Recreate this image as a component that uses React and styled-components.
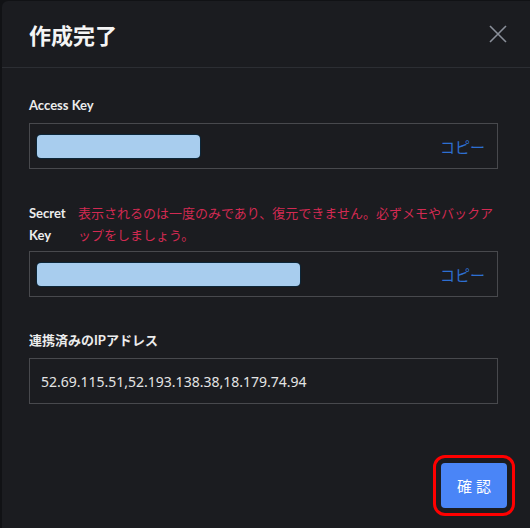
import React from 'react'
import styled, { createGlobalStyle } from 'styled-components'

const GlobalStyle = createGlobalStyle`
    html, body {
        margin: 0;
        background: #111215;
        overflow: hidden;
    }
    * {
        box-sizing: border-box;
    }
`

const Backdrop = styled.div`
    width: 530px;
    height: 528px;
    padding: 1px 0 0 2px;
    background: #111215;
`

const Modal = styled.div`
    width: 528px;
    min-height: 527px;
    background: #1b1c20;
    border-top-left-radius: 6px;
    display: flex;
    flex-direction: column;
`

const Header = styled.header`
    height: 67px;
    display: flex;
    align-items: center;
    justify-content: space-between;
    padding: 0 22px 0 27px;
    border-bottom: 1px solid #2c2e33;
    h1 {
        margin: 0;
        font-family: "Noto Sans CJK JP", sans-serif;
        font-size: 22px;
        font-weight: 700;
        color: #f4f4f4;
        line-height: 1;
    }
`

const CloseButton = styled.button`
    width: 20px;
    height: 20px;
    padding: 0;
    border: none;
    background: none;
    display: flex;
    align-items: center;
    justify-content: center;
    cursor: pointer;
`

const Body = styled.div`
    display: flex;
    flex-direction: column;
    gap: 33px;
    padding: 27px 32px 0 27px;
`

const Field = styled.section`
    display: flex;
    flex-direction: column;
    gap: ${p => p.gap}px;
`

const LabelRow = styled.div`
    display: flex;
    align-items: flex-start;
    gap: 12px;
`

const Label = styled.label`
    flex-shrink: 0;
    width: ${p => (p.width ? `${p.width}px` : 'auto')};
    font-family: "Lato", "Noto Sans CJK JP", sans-serif;
    font-size: 13px;
    font-weight: 700;
    line-height: ${p => p.lh || 20}px;
    color: #ececec;
`

const Warning = styled.p`
    margin: 0;
    flex: 1;
    font-family: "Noto Sans CJK JP", sans-serif;
    font-size: 13px;
    line-height: 22px;
    color: #d22a52;
    line-break: loose;
`

const InputBox = styled.div`
    height: 46px;
    border: 1px solid #48494d;
    display: flex;
    align-items: center;
    justify-content: space-between;
    padding: 0 12px 0 7px;
`

const Masked = styled.div`
    width: ${p => p.width}px;
    height: 23px;
    border-radius: 4px;
    background: #a8cdee;
    box-shadow: 0 0 0 1px #0c2638;
`

const CopyLink = styled.span`
    font-family: "Noto Sans CJK JP", sans-serif;
    font-size: 15px;
    color: #2e6fd2;
    cursor: pointer;
`

const Value = styled.span`
    padding-left: 4px;
    font-family: "Noto Sans", sans-serif;
    font-size: 14px;
    color: #e4e4e4;
`

const Footer = styled.footer`
    display: flex;
    justify-content: flex-end;
    padding: 59px 23px 0 0;
`

const ConfirmButton = styled.button`
    width: 66px;
    height: 45px;
    border: none;
    border-radius: 4px;
    background: #4a85f7;
    color: #ffffff;
    font-family: "Noto Sans CJK JP", sans-serif;
    font-size: 15px;
    letter-spacing: 4px;
    padding: 0 0 0 4px;
    outline: 3px solid #ff0000;
    outline-offset: 5px;
    cursor: pointer;
`

function KeyField({ label, labelWidth, note, maskWidth }) {
    return (
        <Field gap={note ? 5 : 8}>
            <LabelRow>
                <Label width={labelWidth} lh={note ? 22 : 20}>{label}</Label>
                {note && <Warning>{note}</Warning>}
            </LabelRow>
            <InputBox>
                <Masked width={maskWidth} />
                <CopyLink>コピー</CopyLink>
            </InputBox>
        </Field>
    )
}

export default function App() {
    return (
        <>
            <GlobalStyle />
            <Backdrop>
                <Modal>
                    <Header>
                        <h1>作成完了</h1>
                        <CloseButton aria-label="close">
                            <svg width="18" height="18" viewBox="0 0 18 18">
                                <path d="M1 1 L17 17 M17 1 L1 17" stroke="#8a8f99" strokeWidth="1.6" fill="none" />
                            </svg>
                        </CloseButton>
                    </Header>
                    <Body>
                        <KeyField label="Access Key" maskWidth={163} />
                        <KeyField
                            label="Secret Key"
                            labelWidth={37}
                            note="表示されるのは一度のみであり、復元できません。必ずメモやバックアップをしましょう。"
                            maskWidth={263}
                        />
                        <Field gap={8}>
                            <Label>連携済みのIPアドレス</Label>
                            <InputBox>
                                <Value>52.69.115.51,52.193.138.38,18.179.74.94</Value>
                            </InputBox>
                        </Field>
                    </Body>
                    <Footer>
                        <ConfirmButton>確認</ConfirmButton>
                    </Footer>
                </Modal>
            </Backdrop>
        </>
    )
}
